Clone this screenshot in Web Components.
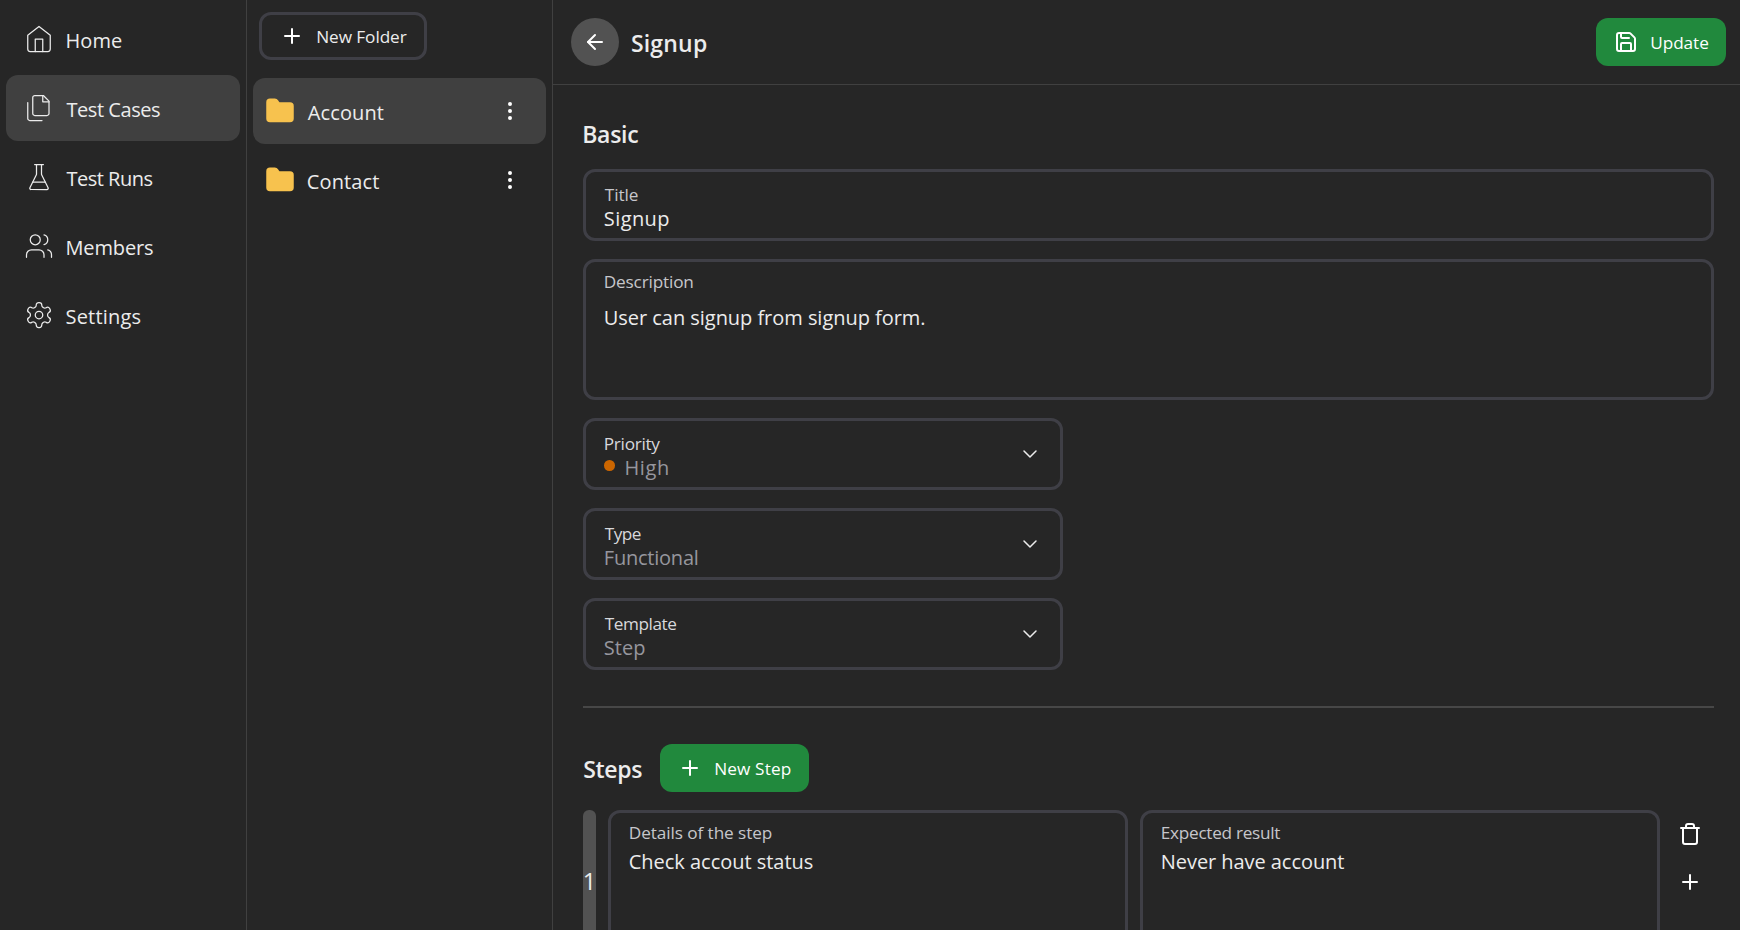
<!DOCTYPE html>
<html lang="en">
<head>
<meta charset="utf-8">
<title>Signup</title>
<style>
html, body { margin: 0; height: 100%; overflow: hidden; background: #262626; }
body { font-family: "Open Sans", "Noto Sans", sans-serif; color: #ececec; }
</style>
</head>
<body>
<case-app></case-app>
<script>
const ICONS = {
  home: '<path d="m3 9 9-7 9 7v11a2 2 0 0 1-2 2H5a2 2 0 0 1-2-2z"/><path d="M9 22V12h6v10"/>',
  files: '<path d="M15.5 2H8.6c-.4 0-.8.2-1.1.5-.3.3-.5.7-.5 1.1v12.8c0 .4.2.8.5 1.1.3.3.7.5 1.1.5h9.8c.4 0 .8-.2 1.1-.5.3-.3.5-.7.5-1.1V6.5L15.5 2z"/><path d="M3 7.6v12.8c0 .4.2.8.5 1.1.3.3.7.5 1.1.5h9.8"/><path d="M15 2v5h5"/>',
  flask: '<path d="M10 2v7.527a2 2 0 0 1-.211.896L4.72 20.55a1 1 0 0 0 .9 1.45h12.76a1 1 0 0 0 .9-1.45l-5.069-10.127A2 2 0 0 1 14 9.527V2"/><path d="M8.5 2h7"/><path d="M7 16h10"/>',
  users: '<path d="M16 21v-2a4 4 0 0 0-4-4H6a4 4 0 0 0-4 4v2"/><circle cx="9" cy="7" r="4"/><path d="M22 21v-2a4 4 0 0 0-3-3.87"/><path d="M16 3.13a4 4 0 0 1 0 7.75"/>',
  settings: '<path d="M12.22 2h-.44a2 2 0 0 0-2 2v.18a2 2 0 0 1-1 1.73l-.43.25a2 2 0 0 1-2 0l-.15-.08a2 2 0 0 0-2.73.73l-.22.38a2 2 0 0 0 .73 2.73l.15.1a2 2 0 0 1 1 1.72v.51a2 2 0 0 1-1 1.74l-.15.09a2 2 0 0 0-.73 2.73l.22.38a2 2 0 0 0 2.73.73l.15-.08a2 2 0 0 1 2 0l.43.25a2 2 0 0 1 1 1.73V20a2 2 0 0 0 2 2h.44a2 2 0 0 0 2-2v-.18a2 2 0 0 1 1-1.73l.43-.25a2 2 0 0 1 2 0l.15.08a2 2 0 0 0 2.73-.73l.22-.39a2 2 0 0 0-.73-2.73l-.15-.08a2 2 0 0 1-1-1.74v-.5a2 2 0 0 1 1-1.74l.15-.09a2 2 0 0 0 .73-2.73l-.22-.38a2 2 0 0 0-2.73-.73l-.15.08a2 2 0 0 1-2 0l-.43-.25a2 2 0 0 1-1-1.73V4a2 2 0 0 0-2-2z"/><circle cx="12" cy="12" r="3"/>',
  folder: '<path fill="currentColor" d="M20 20a2 2 0 0 0 2-2V8a2 2 0 0 0-2-2h-7.9a2 2 0 0 1-1.69-.9L9.6 3.9A2 2 0 0 0 7.93 3H4a2 2 0 0 0-2 2v13a2 2 0 0 0 2 2Z"/>',
  plus: '<path d="M5 12h14"/><path d="M12 5v14"/>',
  more: '<circle cx="12" cy="12" r="1"/><circle cx="12" cy="5" r="1"/><circle cx="12" cy="19" r="1"/>',
  back: '<path d="m12 19-7-7 7-7"/><path d="M19 12H5"/>',
  save: '<path d="M15.2 3a2 2 0 0 1 1.4.6l3.8 3.8a2 2 0 0 1 .6 1.4V19a2 2 0 0 1-2 2H5a2 2 0 0 1-2-2V5a2 2 0 0 1 2-2z"/><path d="M17 21v-7a1 1 0 0 0-1-1H8a1 1 0 0 0-1 1v7"/><path d="M7 3v4a1 1 0 0 0 1 1h7"/>',
  chevron: '<path d="m6 9 6 6 6-6"/>',
  trash: '<path d="M3 6h18"/><path d="M19 6v14c0 1-1 2-2 2H7c-1 0-2-1-2-2V6"/><path d="M8 6V4c0-1 1-2 2-2h4c1 0 2 1 2 2v2"/>'
};

const define = (name, html, after) => customElements.define(name, class extends HTMLElement {
  connectedCallback() {
    if (this.shadowRoot) return;
    const root = this.attachShadow({ mode: 'open' });
    root.innerHTML = typeof html === 'function' ? html(k => this.getAttribute(k)) : html;
    if (after) after(this, root);
  }
});

/* Line icon: name, size in px, stroke width in viewBox units. */
define('ui-icon', a => `<style>
  :host { display: block; flex: none; width: ${a('size') || 24}px; height: ${a('size') || 24}px; }
  svg { display: block; width: 100%; height: 100%; }
</style><svg viewBox="0 0 24 24" fill="none" stroke="currentColor" stroke-width="${a('stroke') || 2}" stroke-linecap="round" stroke-linejoin="round">${ICONS[a('name')]}</svg>`);

/* Single line of text, tracked so that its glyphs span exactly `ink` pixels. */
const pen = document.createElement('canvas').getContext('2d');
define('fit-text', `<style>
  :host { display: block; white-space: nowrap; flex: none; }
  span { display: inline-block; vertical-align: top; }
</style><span></span>`, (el, root) => {
  const s = root.querySelector('span'), t = el.getAttribute('text'), ink = +el.getAttribute('ink');
  s.textContent = t;
  const c = getComputedStyle(el);
  pen.font = `${c.fontWeight} ${c.fontSize} ${c.fontFamily}`;
  const m = pen.measureText(t);
  const natural = m.actualBoundingBoxLeft + m.actualBoundingBoxRight;
  if (t.length > 1) s.style.letterSpacing = (ink - natural) / (t.length - 1) + 'px';
  s.style.marginLeft = m.actualBoundingBoxLeft + 'px';
  el.style.width = ink + 'px';
});

define('nav-item', a => `<style>
  :host { display: flex; align-items: center; gap: 12.5px; height: 66px; padding-left: 18px; border-radius: 12px; font-size: 20px; line-height: 28px; }
  :host([selected]) { background: #404040; }
  fit-text { margin-top: 4px; }
</style><ui-icon name="${a('icon')}" size="30" stroke="1"></ui-icon><fit-text text="${a('label')}" ink="${a('ink')}"></fit-text>`);

define('folder-item', a => `<style>
  :host { display: flex; align-items: center; height: 66px; box-sizing: border-box; padding: 0 24px 0 12px; border-radius: 12px; font-size: 20px; line-height: 28px; }
  :host([selected]) { background: #404040; }
  .f { color: #f7c24e; margin-right: 12.8px; }
  .m { color: #fff; margin-left: auto; }
  fit-text { margin-top: 4px; }
</style><ui-icon class="f" name="folder" size="30"></ui-icon><fit-text text="${a('label')}" ink="${a('ink')}"></fit-text><ui-icon class="m" name="more"></ui-icon>`);

define('ui-button', a => `<style>
  :host { display: flex; align-items: center; gap: 13.2px; height: 48px; box-sizing: border-box; width: ${a('w')}px; padding-left: 18px; border-radius: 12px; font-size: 17.2px; line-height: 24px; background: #21893d; color: #fff; }
  :host([outline]) { background: none; border: 3px solid #3f3f46; color: #ececec; }
  ui-icon { color: #fff; }
  fit-text { margin-top: 1px; }
</style><ui-icon name="${a('icon')}"></ui-icon><fit-text text="${a('label')}" ink="${a('ink')}"></fit-text>`);

/* Bordered field: label, value, optional status dot and chevron. */
define('ui-field', a => `<style>
  :host { display: flex; box-sizing: border-box; height: 72px; border: 3px solid #3f3f46; border-radius: 12px; padding: 11px 18px 0 18.8px; }
  :host([area]) { padding-top: 8px; }
  .b { flex: 1; }
  .l { font-size: 17.2px; line-height: 23px; margin-bottom: -1px; color: #c6c6cb; }
  .v { font-size: 20px; line-height: 28px; color: #ececec; }
  :host([area]) .v { padding-top: ${a('area') || 0}px; }
  :host([select]) .l { color: #d8d8dc; }
  :host([select]) .v { color: #96969e; display: flex; }
  i { width: 10.6px; height: 10.6px; border-radius: 50%; background: #cc6600; margin: 6.4px 10.4px 0 -.4px; }
  ui-icon { color: #ececec; margin: 10px 0 0; }
</style><div class="b"><fit-text class="l" text="${a('label')}" ink="${a('lw')}"></fit-text><div class="v">${a('dot') !== null ? '<i></i>' : ''}<fit-text text="${a('value')}" ink="${a('vw')}"></fit-text></div></div>${a('select') !== null ? '<ui-icon name="chevron" stroke="1.5"></ui-icon>' : ''}`);

define('side-nav', `<style>
  :host { display: flex; flex-direction: column; gap: 3px; box-sizing: border-box; width: 247px; padding: 6px; border-right: 1px solid #404040; }
</style>
<nav-item icon="home" label="Home" ink="55.5"></nav-item>
<nav-item selected icon="files" label="Test Cases" ink="93.5"></nav-item>
<nav-item icon="flask" label="Test Runs" ink="86"></nav-item>
<nav-item icon="users" label="Members" ink="86.5"></nav-item>
<nav-item icon="settings" label="Settings" ink="74"></nav-item>`);

define('folder-pane', `<style>
  :host { display: flex; flex-direction: column; gap: 3px; box-sizing: border-box; width: 306px; padding: 12px 6px; border-right: 1px solid #404040; }
  ui-button { margin: 0 0 15px 6px; }
</style>
<ui-button outline icon="plus" w="168" label="New Folder" ink="89.5"></ui-button>
<folder-item selected label="Account" ink="76"></folder-item>
<folder-item label="Contact" ink="71.5"></folder-item>`);

define('case-header', `<style>
  :host { display: flex; align-items: center; box-sizing: border-box; height: 85px; padding: 0 14px 0 18px; border-bottom: 1px solid #404040; }
  .back { display: grid; place-items: center; width: 48px; height: 48px; border-radius: 50%; background: #525252; color: #fff; margin-right: 12.9px; }
  fit-text { font-size: 23px; font-weight: 600; line-height: 32px; margin-top: 1px; }
  ui-button { margin-left: auto; }
</style>
<div class="back"><ui-icon name="back"></ui-icon></div>
<fit-text text="Signup" ink="75"></fit-text>
<ui-button icon="save" w="130" label="Update" ink="57"></ui-button>`);

define('step-row', `<style>
  :host { display: grid; grid-template-columns: 13px 520px 520px 24px; column-gap: 12px; height: 144px; }
  .n { display: flex; align-items: center; justify-content: center; box-sizing: border-box; padding-bottom: 2px; background: #525252; border-radius: 6px; font-size: 23.5px; line-height: 32px; }
  ui-field { height: 144px; }
  .a { display: flex; flex-direction: column; gap: 24px; padding: 12px 0 0 6px; color: #fff; }
</style>
<div class="n">1</div>
<ui-field area="5" label="Details of the step" lw="142" value="Check accout status" vw="183"></ui-field>
<ui-field area="5" label="Expected result" lw="118.5" value="Never have account" vw="182.5"></ui-field>
<div class="a"><ui-icon name="trash"></ui-icon><ui-icon name="plus"></ui-icon></div>`);

define('case-form', `<style>
  :host { display: block; padding: 30px 26px 0 30px; }
  .h { font-size: 23px; font-weight: 600; line-height: 32px; margin-left: 1.2px; }
  .t { padding: 3px 0 1px; }
  .g { display: flex; flex-direction: column; gap: 18px; margin-top: 18px; }
  [select] { width: 480px; }
  .d { height: 141px; }
  hr { height: 2px; border: 0; margin: 36px 0; background: #474747; }
  .s { display: flex; align-items: center; margin-bottom: 18px; }
  .s .h { margin-top: 2px; margin-right: 17.8px; }
</style>
<fit-text class="h t" text="Basic" ink="54"></fit-text>
<div class="g">
  <ui-field label="Title" lw="33" value="Signup" vw="64.5"></ui-field>
  <ui-field class="d" area="12" label="Description" lw="88.5" value="User can signup from signup form." vw="319.5"></ui-field>
  <ui-field select dot label="Priority" lw="55.5" value="High" vw="42.5"></ui-field>
  <ui-field select label="Type" lw="36" value="Functional" vw="93"></ui-field>
  <ui-field select label="Template" lw="71.5" value="Step" vw="40.5"></ui-field>
</div>
<hr>
<div class="s"><fit-text class="h" text="Steps" ink="58"></fit-text><ui-button icon="plus" w="149" label="New Step" ink="75.5"></ui-button></div>
<step-row></step-row>`);

define('case-app', `<style>
  :host { display: grid; grid-template-columns: 247px 306px 1fr; height: 100vh; overflow: hidden; }
</style>
<side-nav></side-nav><folder-pane></folder-pane>
<main><case-header></case-header><case-form></case-form></main>`);
</script>
</body>
</html>
